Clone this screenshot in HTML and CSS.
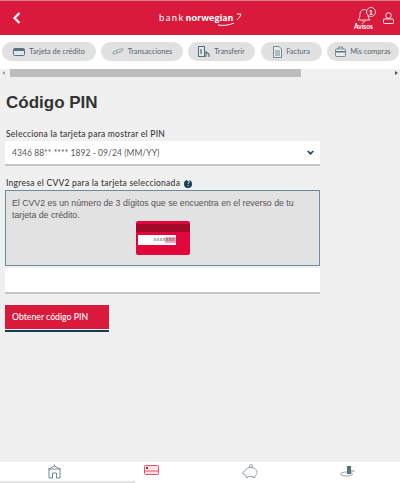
FILE: index.html
```html
<!DOCTYPE html>
<html lang="es">

<head>
    <meta charset="UTF-8">
    <title>Código PIN</title>
    <link rel="stylesheet" href="styles.css">
</head>

<body>
    <!-- cabecera -->
    <header class="top">
        <svg class="back" width="8" height="12" viewBox="0 0 8 12">
            <path d="M6.5 1 L1.5 6 L6.5 11" fill="none" stroke="#fff" stroke-width="2.2" />
        </svg>
        <div class="logo">
            <span class="logo-light">bank</span><span class="logo-bold">norwegian</span>
            <svg class="swoosh" width="28" height="14" viewBox="0 0 28 14">
                <path d="M4 12 C9 13 16 12 20 10" fill="none" stroke="#fff" stroke-width="1" />
                <path d="M23 1 L27 1 C26 4 25 5 23 7" fill="none" stroke="#fff" stroke-width="1" />
            </svg>
        </div>
        <div class="avisos">
            <svg width="24" height="17" viewBox="0 0 24 17">
                <path d="M3 13 C5 11 5 9 5 7 C5 4 7 2.500 9 2.500 C11 2.500 13 4 13 7 C13 9 13 11 15 13 Z M7.500 13.500 C8 15.500 10 15.500 10.500 13.500" fill="none" stroke="#fff" stroke-width=".8" />
                <circle cx="16" cy="5" r="4.500" fill="#d91a3c" stroke="#fff" stroke-width=".8" />
                <text x="16" y="7.500" class="badge">1</text>
            </svg>
            <span>Avisos</span>
        </div>
        <svg class="user" width="11" height="12" viewBox="0 0 11 12">
            <circle cx="5.500" cy="3.500" r="2.800" fill="none" stroke="#fff" stroke-width=".9" />
            <rect x=".5" y="7" width="10" height="4.500" rx="1" fill="none" stroke="#fff" stroke-width=".9" />
        </svg>
    </header>

    <!-- pestañas -->
    <nav class="tabs">
        <a class="tab tab1">
            <svg width="12" height="8" viewBox="0 0 12 8">
                <rect x=".5" y=".5" width="11" height="7" rx="1" fill="#dfe8ec" stroke="#58717f" />
                <rect x="1" y="1" width="10" height="2" fill="#58717f" />
            </svg>
            Tarjeta de crédito
        </a>
        <a class="tab tab2">
            <svg width="12" height="7" viewBox="0 0 12 7">
                <path d="M1 4 L8 1 L11 1 L10 3 L3 6 L1 6 Z M4 3 L7 5" fill="none" stroke="#7d929e" stroke-width=".8" />
            </svg>
            Transacciones
        </a>
        <a class="tab tab3">
            <svg width="12" height="12" viewBox="0 0 12 12">
                <rect x=".5" y=".5" width="6" height="10" fill="#dfe8ec" stroke="#58717f" />
                <path d="M3 3 L3 8 M8 5 L8 11 M8 6 L11 8 L11 11" fill="none" stroke="#58717f" stroke-width="1.200" />
            </svg>
            Transferir
        </a>
        <a class="tab tab4">
            <svg width="9" height="12" viewBox="0 0 9 12">
                <path d="M.5 .5 L6 .5 L8.500 3 L8.500 11.500 L.5 11.500 Z" fill="#e8eef0" stroke="#58717f" stroke-width=".8" />
                <path d="M2 5 L7 5 M2 7 L7 7 M2 9 L7 9" stroke="#58717f" stroke-width=".8" />
            </svg>
            Factura
        </a>
        <a class="tab tab5">
            <svg width="11" height="11" viewBox="0 0 11 11">
                <rect x=".5" y="3" width="10" height="7.500" rx="1" fill="#e8eef0" stroke="#58717f" stroke-width=".8" />
                <path d="M3 3 L3.500 1 L7.500 1 L8 3" fill="none" stroke="#58717f" stroke-width=".8" />
                <rect x="1" y="5" width="9" height="1.500" fill="#58717f" />
            </svg>
            Mis compras
        </a>
    </nav>
    <div class="scroll">
        <span class="arrow-left"></span>
        <div class="scroll-track">
            <div class="scroll-thumb"></div>
        </div>
        <span class="arrow-right"></span>
    </div>

    <main class="content">
        <h1>Código PIN</h1>

        <label class="lbl">Selecciona la tarjeta para mostrar el PIN</label>
        <div class="select">
            <span>4346 88** **** 1892 - 09/24 (MM/YY)</span>
            <svg width="7" height="5" viewBox="0 0 7 5">
                <path d="M.8 1 L3.500 3.800 L6.200 1" fill="none" stroke="#123f56" stroke-width="1.500" />
            </svg>
        </div>

        <label class="lbl lbl2">
            Ingresa el CVV2 para la tarjeta seleccionada
            <span class="help">?</span>
        </label>
        <div class="info">
            <p>El CVV2 es un número de 3 dígitos que se encuentra en el reverso de tu tarjeta de crédito.</p>
            <div class="card">
                <div class="card-stripe"></div>
                <div class="card-sign">
                    <span class="card-num">xxxx</span><span class="card-cvv">xxx</span>
                </div>
            </div>
        </div>
        <div class="field"></div>

        <button class="btn">Obtener código PIN</button>
    </main>

    <!-- menu inferior -->
    <footer class="bottom">
        <svg width="15" height="15" viewBox="0 0 15 15">
            <path d="M2 5 L7.500 2 L13 5 L13 14 L9.500 14 L9.500 9 L5.500 9 L5.500 14 L2 14 Z M1 5 L14 5 M7.500 2 L7.500 .5" fill="none" stroke="#6f8c9c" stroke-width="1" />
        </svg>
        <svg class="bottom-card" width="15" height="10" viewBox="0 0 15 10">
            <rect x=".5" y=".5" width="14" height="9" rx="1" fill="#fbe3e8" stroke="#e2526f" />
            <rect x="1" y="5.500" width="13" height="1" fill="#e2526f" />
            <rect x="2" y="2" width="2" height="2" fill="#d91a3c" />
        </svg>
        <svg width="16" height="14" viewBox="0 0 16 14">
            <path d="M1 8 L3 7 C4 4 7 3 10 3.500 C13 4 15 6 15 8.500 C15 10 14 11.500 13 12 L13 13.500 L11 13.500 L11 12.500 L6 12.500 L6 13.500 L4 13.500 L4 11.500 L1 10 Z" fill="none" stroke="#7d929e" stroke-width=".8" />
            <circle cx="9" cy="2" r="1.500" fill="none" stroke="#7d929e" stroke-width=".8" />
        </svg>
        <svg class="bottom-card" width="15" height="12" viewBox="0 0 15 12">
            <ellipse cx="6.500" cy="9" rx="6" ry="2" fill="none" stroke="#7d929e" stroke-width=".8" />
            <rect x="7" y="1" width="4" height="8" fill="#58717f" />
            <path d="M11 6 L14.500 6" stroke="#7d929e" stroke-width="1" />
        </svg>
    </footer>
    <div class="bottom-scroll">
        <div class="bottom-thumb"></div>
    </div>
</body>

</html>
```

FILE: styles.css
```css
* {
    margin: 0;
    padding: 0;
    box-sizing: border-box;
}

html,
body {
    height: 100%;
}

body {
    display: flex;
    flex-direction: column;
    overflow: hidden;
    background: #f0f0f0;
    font-family: "Lato", "Liberation Sans", sans-serif;
    color: #3a3a3a;
}

/* cabecera */
.top {
    display: flex;
    align-items: center;
    flex: none;
    height: 35px;
    padding: 0 6px 0 13px;
    background: #d91a3c;
    border-top: 1px solid #d9808f;
    color: #fff;
}

.logo {
    display: flex;
    align-items: center;
    flex: none;
    gap: 1px;
    margin-left: 138px;
    width: 84px;
    font-size: 9.5px;
    line-height: 12px;
    white-space: nowrap;
}

.logo-light {
    letter-spacing: 1.4px;
}

.logo-bold {
    font-weight: 900;
    letter-spacing: .3px;
}

.swoosh {
    flex: none;
    margin: 4px 0 0 -20px;
}

.avisos {
    display: flex;
    flex-direction: column;
    align-items: flex-start;
    flex: none;
    margin-left: 111px;
    width: 28px;
    font-size: 6.5px;
    font-weight: 700;
    line-height: 7px;
}

.avisos svg {
    margin: 0 0 -1px 1px;
}

.badge {
    font-family: "Liberation Sans", sans-serif;
    font-size: 7px;
    font-weight: 700;
    fill: #fff;
    text-anchor: middle;
}

.user {
    margin: 0 0 0 1px;
}

/* pestañas */
.tabs {
    display: flex;
    flex: none;
    gap: 5px;
    height: 34px;
    padding: 7px 0 0 2px;
    overflow: hidden;
    background: #fff;
}

.tab {
    display: flex;
    align-items: center;
    justify-content: center;
    flex: none;
    gap: 4px;
    height: 19px;
    border-radius: 10px;
    background: #e1e1e1;
    color: #55656e;
    font-size: 7.3px;
    white-space: nowrap;
}

.tab1 {
    width: 94px;
}

.tab2 {
    width: 82px;
}

.tab3 {
    width: 67px;
}

.tab4 {
    width: 61px;
    margin-left: 1px;
}

.tab5 {
    width: 72px;
}

/* barra de scroll */
.scroll {
    display: flex;
    align-items: center;
    flex: none;
    height: 8px;
    background: #f1f1f1;
}

.scroll-track {
    flex: 1;
    margin: 0 3px;
}

.scroll-thumb {
    width: 291px;
    height: 8px;
    background: #bdbdbd;
}

.arrow-left,
.arrow-right {
    width: 0;
    height: 0;
    margin: 0 2px;
    border-top: 2px solid transparent;
    border-bottom: 2px solid transparent;
}

.arrow-left {
    border-right: 3px solid #a3a3a3;
}

.arrow-right {
    border-left: 3px solid #505050;
}

/* contenido */
.content {
    flex: 1;
    padding: 15px 80px 0 5px;
}

h1 {
    margin-left: 1px;
    font-family: "Liberation Sans", sans-serif;
    font-size: 17px;
    line-height: 22px;
    font-weight: 700;
    color: #333;
}

.lbl {
    display: flex;
    align-items: center;
    gap: 4px;
    margin: 15px 0 0 1px;
    font-size: 8.5px;
    line-height: 11px;
    font-weight: 500;
    letter-spacing: .25px;
}

.lbl2 {
    margin-top: 12px;
}

.help {
    width: 8px;
    height: 8px;
    border-radius: 50%;
    background: #123f56;
    color: #fff;
    font-size: 6.5px;
    font-weight: 700;
    line-height: 8px;
    text-align: center;
    letter-spacing: 0;
}

.select {
    display: flex;
    align-items: center;
    justify-content: space-between;
    height: 25px;
    margin-top: 1px;
    padding: 0 6px 0 7px;
    background: #fff;
    border-bottom: 2px solid #c4c4c4;
    color: #5a5a5a;
    font-size: 8.5px;
    letter-spacing: .05px;
}

.info {
    height: 76px;
    margin-top: 1px;
    padding: 6px 6px 0;
    background: #e2e2e2;
    border: 1px solid #6b8d9f;
}

.info p {
    font-family: "Liberation Sans", sans-serif;
    font-size: 8.75px;
    line-height: 12px;
    color: #555;
}

.card {
    width: 54px;
    height: 34px;
    margin: 0 auto;
    padding-top: 3px;
    border-radius: 2px;
    background: #e0083a;
}

.card-stripe {
    height: 8px;
    background: #a30a2a;
}

.card-sign {
    display: flex;
    align-items: center;
    justify-content: flex-end;
    width: 38px;
    height: 10px;
    margin: 3px 0 0 2px;
    background: #fff;
    font-family: "Liberation Mono", monospace;
    font-size: 5px;
    color: #444;
}

.card-cvv {
    padding-right: 1px;
    background: #f0a8b8;
}

.field {
    height: 26px;
    margin-top: 2px;
    background: #fff;
    border-bottom: 2px solid #c4c4c4;
}

.btn {
    display: block;
    width: 104px;
    height: 27px;
    margin-top: 11px;
    padding: 0 0 3px 7px;
    border: 0;
    border-bottom: 2px solid #123f56;
    background: linear-gradient(#d91a3c, #d91a3c 24px, #f0f0f0 24px);
    color: #fff;
    font-family: "Lato", "Liberation Sans", sans-serif;
    font-size: 8.7px;
    font-weight: 500;
    text-align: left;
}

/* menu inferior */
.bottom {
    display: grid;
    grid-template-columns: 108px 86px 112px 82px;
    justify-items: center;
    align-items: start;
    flex: none;
    height: 19px;
    padding-top: 2px;
    background: #fff;
}

.bottom-card {
    margin-top: 1px;
}

.bottom-scroll {
    flex: none;
    height: 2px;
    background: #fff;
}

.bottom-thumb {
    width: 135px;
    height: 2px;
    background: #e2e2e2;
}
```
